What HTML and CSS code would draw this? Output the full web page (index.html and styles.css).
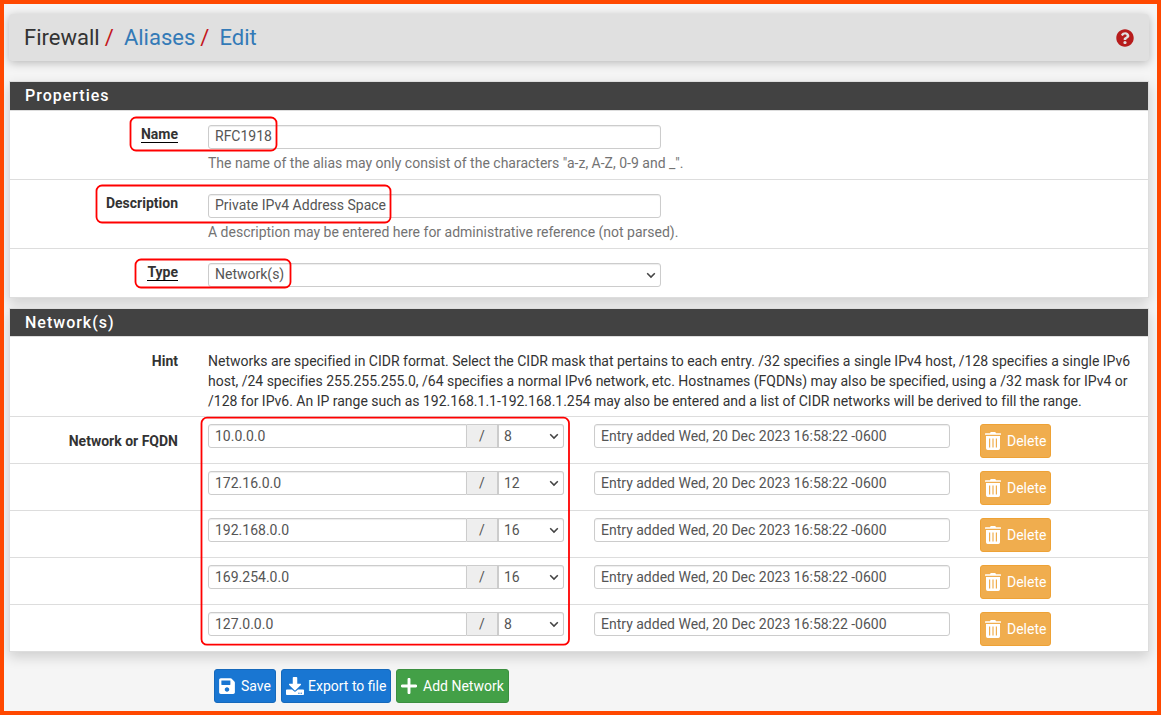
FILE: index.html
```
<!DOCTYPE html>
<html lang="en">
<head>
<meta charset="utf-8">
<title>Firewall: Aliases: Edit</title>
<link rel="stylesheet" href="styles.css">
</head>
<body>
<div class="frame">
  <header class="page-header">
    <div class="crumbs"><span>Firewall</span><i>/</i><a>Aliases</a><i>/</i><a>Edit</a></div>
    <svg class="help-icon" viewBox="0 0 512 512"><path fill="#b71c1c" d="M504 256c0 136.997-111.043 248-248 248S8 392.997 8 256C8 119.083 119.043 8 256 8s248 111.083 248 248zM262.655 90c-54.497 0-89.255 22.957-116.549 63.758-3.536 5.286-2.353 12.415 2.715 16.258l34.699 26.310c5.205 3.947 12.621 3.008 16.665-2.122 17.864-22.658 30.113-35.797 57.303-35.797 20.429 0 45.698 13.148 45.698 32.958 0 14.976-12.363 22.667-32.534 33.976C247.128 238.528 216 254.941 216 296v4c0 6.627 5.373 12 12 12h56c6.627 0 12-5.373 12-12v-1.333c0-28.462 83.186-29.647 83.186-106.667 0-58.002-60.165-102-116.531-102zM256 338c-25.365 0-46 20.635-46 46 0 25.364 20.635 46 46 46s46-20.636 46-46c0-25.365-20.635-46-46-46z"/></svg>
  </header>

  <section class="panel">
    <h2 class="panel-title">Properties</h2>
    <div class="row field-row">
      <label class="label"><span class="required">Name</span></label>
      <div class="field"><input class="control wide" value="RFC1918"><p class="help">The name of the alias may only consist of the characters "a-z, A-Z, 0-9 and _".</p></div>
      <svg class="mark mark-name"><rect class="mark-line"/></svg>
    </div>
    <div class="row field-row">
      <label class="label">Description</label>
      <div class="field"><input class="control wide" value="Private IPv4 Address Space"><p class="help">A description may be entered here for administrative reference (not parsed).</p></div>
      <svg class="mark mark-desc"><rect class="mark-line"/></svg>
    </div>
    <div class="row field-row type-row">
      <label class="label"><span class="required">Type</span></label>
      <div class="field"><select class="control wide"><option>Network(s)</option></select></div>
      <svg class="mark mark-type"><rect class="mark-line"/></svg>
    </div>
  </section>

  <section class="panel networks">
    <h2 class="panel-title">Network(s)</h2>
    <div class="row hint-row">
      <div class="label">Hint</div>
      <div class="hint">Networks are specified in CIDR format. Select the CIDR mask that pertains to each entry. /32 specifies a single IPv4 host, /128 specifies a single IPv6<br>host, /24 specifies 255.255.255.0, /64 specifies a normal IPv6 network, etc. Hostnames (FQDNs) may also be specified, using a /32 mask for IPv4 or<br>/128 for IPv6. An IP range such as 192.168.1.1-192.168.1.254 may also be entered and a list of CIDR networks will be derived to fill the range.</div>
    </div>
    <div class="row net-row">
      <div class="label">Network or FQDN</div>
      <div class="group"><input class="control" value="10.0.0.0"><span class="addon">/</span><select class="control"><option>8</option></select></div>
      <input class="control detail" value="Entry added Wed, 20 Dec 2023 16:58:22 -0600">
      <button class="btn delete"><svg class="icon" viewBox="0 0 16 18"><use href="#trash"/></svg>Delete</button>
      <svg class="mark mark-nets"><rect class="mark-line"/></svg>
    </div>
    <div class="row net-row">
      <div class="label"></div>
      <div class="group"><input class="control" value="172.16.0.0"><span class="addon">/</span><select class="control"><option>12</option></select></div>
      <input class="control detail" value="Entry added Wed, 20 Dec 2023 16:58:22 -0600">
      <button class="btn delete"><svg class="icon" viewBox="0 0 16 18"><use href="#trash"/></svg>Delete</button>
    </div>
    <div class="row net-row">
      <div class="label"></div>
      <div class="group"><input class="control" value="192.168.0.0"><span class="addon">/</span><select class="control"><option>16</option></select></div>
      <input class="control detail" value="Entry added Wed, 20 Dec 2023 16:58:22 -0600">
      <button class="btn delete"><svg class="icon" viewBox="0 0 16 18"><use href="#trash"/></svg>Delete</button>
    </div>
    <div class="row net-row">
      <div class="label"></div>
      <div class="group"><input class="control" value="169.254.0.0"><span class="addon">/</span><select class="control"><option>16</option></select></div>
      <input class="control detail" value="Entry added Wed, 20 Dec 2023 16:58:22 -0600">
      <button class="btn delete"><svg class="icon" viewBox="0 0 16 18"><use href="#trash"/></svg>Delete</button>
    </div>
    <div class="row net-row">
      <div class="label"></div>
      <div class="group"><input class="control" value="127.0.0.0"><span class="addon">/</span><select class="control"><option>8</option></select></div>
      <input class="control detail" value="Entry added Wed, 20 Dec 2023 16:58:22 -0600">
      <button class="btn delete"><svg class="icon" viewBox="0 0 16 18"><use href="#trash"/></svg>Delete</button>
    </div>
  </section>

  <div class="actions">
    <button class="btn primary save"><svg class="icon" viewBox="0 0 448 512"><path fill="#fff" d="M433.941 129.941l-83.882-83.882A48 48 0 0 0 316.118 32H48C21.490 32 0 53.490 0 80v352c0 26.510 21.490 48 48 48h352c26.510 0 48-21.490 48-48V163.882a48 48 0 0 0-14.059-33.941zM224 416c-35.346 0-64-28.654-64-64s28.654-64 64-64 64 28.654 64 64-28.654 64-64 64zm96-304.520V212c0 6.627-5.373 12-12 12H76c-6.627 0-12-5.373-12-12V108c0-6.627 5.373-12 12-12h228.520c3.183 0 6.235 1.264 8.485 3.515l3.480 3.480A11.996 11.996 0 0 1 320 111.480z"/></svg>Save</button>
    <button class="btn primary export"><svg class="icon" viewBox="0 0 512 512"><path fill="#fff" d="M216 0h80c13.300 0 24 10.700 24 24v168h87.700c17.800 0 26.700 21.500 14.100 34.100L269.700 378.300c-7.500 7.500-19.800 7.500-27.300 0L90.100 226.100c-12.600-12.600-3.700-34.100 14.100-34.100H192V24c0-13.300 10.700-24 24-24zm296 376v112c0 13.300-10.700 24-24 24H24c-13.300 0-24-10.700-24-24V376c0-13.300 10.700-24 24-24h146.700l49 49c20.100 20.100 52.500 20.100 72.600 0l49-49H488c13.300 0 24 10.700 24 24zm-124 88c0-11-9-20-20-20s-20 9-20 20 9 20 20 20 20-9 20-20zm64 0c0-11-9-20-20-20s-20 9-20 20 9 20 20 20 20-9 20-20z"/></svg>Export to file</button>
    <button class="btn success add"><svg class="icon" viewBox="0 0 16 16"><path d="M8 1.300v13.400M1.300 8h13.400" stroke="#fff" stroke-width="2.900" stroke-linecap="round"/></svg>Add Network</button>
  </div>
</div>
<svg class="symbols"><symbol id="trash" viewBox="0 0 16 18"><path fill="#fff" fill-rule="evenodd" d="M.5 1.200H5L5.700 0h4.600L11 1.200h4.500q.5 0 .5.500v1H0v-1q0-.5.500-.5zM1 4h14v12.300q0 1.700-1.700 1.700H2.700Q1 18 1 16.300zM4 6.500v9h1.200v-9zm3.400 0v9h1.200v-9zm3.400 0v9H12v-9z"/></symbol></svg>
</body>
</html>
```
FILE: styles.css
```
* { box-sizing: border-box; }
body { margin: 0; font: 14px/20px Roboto, sans-serif; color: #333; }
.frame { height: 715px; border: 4px solid #ff4800; background: #f5f5f5; padding: 10px 8px 0 5px; overflow: hidden; }
.page-header { height: 47px; display: flex; align-items: center; justify-content: space-between; padding: 0 15px; background: #e0e0e0; border-radius: 4px; box-shadow: 0 2px 10px rgba(0,0,0,.25); margin-bottom: 20px; }
.crumbs { display: flex; font-size: 22px; line-height: 24px; }
.crumbs i { font-style: normal; color: #c4161c; margin: 0 10.200px 0 5px; }
.crumbs a { color: #337ab7; }
.help-icon { width: 18px; height: 18px; margin-top: 1px; }
.panel { background: #fff; border: 1px solid #ddd; box-shadow: 0 5px 12px rgba(0,0,0,.16); margin-bottom: 10px; }
.panel-title { margin: 0; height: 29px; border-bottom: 1px solid #ddd; background: #424242; color: #fff; font-size: 16px; line-height: 27px; font-weight: 500; letter-spacing: 1px; padding-left: 15px; }
.networks .panel-title { height: 28px; }
.row { display: flex; position: relative; border-bottom: 1px solid #ddd; }
.row:last-child { border-bottom: 0; }
.label { width: 168px; flex: none; text-align: right; font-weight: 700; margin-right: 30px; }
.required { border-bottom: 1px solid #000; }
.field-row { height: 69px; padding-top: 14px; }
.type-row { height: 48px; }
.field-row .label { margin-top: -1px; }
.field { width: 700px; }
.control { display: block; height: 24px; border: 1px solid #ccc; border-radius: 3px; background-color: #fff; box-shadow: inset 0 1px 1px rgba(0,0,0,.075); color: #555; font: 14px/20px Roboto, sans-serif; padding: 0 6px 2px; margin: 0; min-width: 0; }
select.control { appearance: none; background: #fff url("data:image/svg+xml,%3Csvg xmlns='http://www.w3.org/2000/svg' width='10' height='7'%3E%3Cpath d='M1.200 1.200 5 5.100 8.800 1.200' fill='none' stroke='%23444' stroke-width='1.500'/%3E%3C/svg%3E") no-repeat right 4px top 8px; }
.wide { width: 453px; }
.help { margin: 4px 0 0; color: #737373; }
.hint-row { height: 80px; padding-top: 14px; }
.hint { white-space: nowrap; letter-spacing: -.008px; }
.net-row { height: 47px; padding-top: 7px; }
.net-row:last-child { height: 46px; }
.net-row .label { margin-top: 7px; }
.net-row .control { padding-bottom: 0; }
.group { display: flex; width: 386px; height: 24px; flex: none; }
.group input { width: 259px; border-radius: 3px 0 0 3px; }
.group select { width: 67px; border-radius: 0 3px 3px 0; border-left-width: 2px; padding-left: 5px; }
.addon { width: 30px; background: #eee; border: solid #ccc; border-width: 1px 0; color: #555; text-align: center; line-height: 22px; }
.detail { width: 356px; margin-right: 30px; flex: none; }
.btn { display: flex; align-items: center; height: 34px; border: 1px solid; border-radius: 3px; color: #fff; font: 14px/20px Roboto, sans-serif; padding: 0 4px; margin: 0; white-space: nowrap; }
.icon { display: block; flex: none; }
.delete { width: 71px; background: #f0ad4e; border-color: #eea236; }
.delete .icon { width: 16px; height: 18px; margin-right: 6px; }
.actions { display: flex; gap: 5px; padding: 7px 0 0 205px; }
.primary { background: #1976d2; border-color: #1669bb; }
.success { background: #43a047; border-color: #3c8f40; }
.save { width: 62px; }
.save .icon { width: 16px; height: 18px; margin-right: 6px; }
.export { width: 110px; }
.export .icon { width: 18px; height: 18px; margin-right: 4px; }
.add { width: 113px; }
.add .icon { width: 16px; height: 16px; margin-right: 6px; }
.mark { position: absolute; overflow: visible; pointer-events: none; }
.mark-line { x: 1px; y: 1px; width: calc(100% - 2px); height: calc(100% - 2px); rx: 5.500px; fill: none; stroke: #f00; stroke-width: 1.800px; }
/* Offsets are measured from the row's own edge inside the panel border. */
.mark-name { left: 119px; top: 5px; width: 149px; height: 36px; }
.mark-name .mark-line { x: 1.500px; y: 1.500px; width: 146px; height: 33px; }
.mark-desc { left: 85px; top: 4px; width: 297px; height: 40px; }
.mark-desc .mark-line { x: 1.500px; y: 1.500px; width: 294px; height: 37px; }
.mark-type { left: 124px; top: 9px; width: 158px; height: 31px; }
.mark-type .mark-line { x: 1.500px; y: 1.500px; width: 155px; height: 28px; }
.mark-nets { left: 190px; top: -1px; width: 370px; height: 230px; z-index: 2; }
.mark-nets .mark-line { x: 1.500px; y: 1.700px; width: 367.500px; height: 227px; }
.symbols { position: absolute; width: 0; height: 0; }
```
